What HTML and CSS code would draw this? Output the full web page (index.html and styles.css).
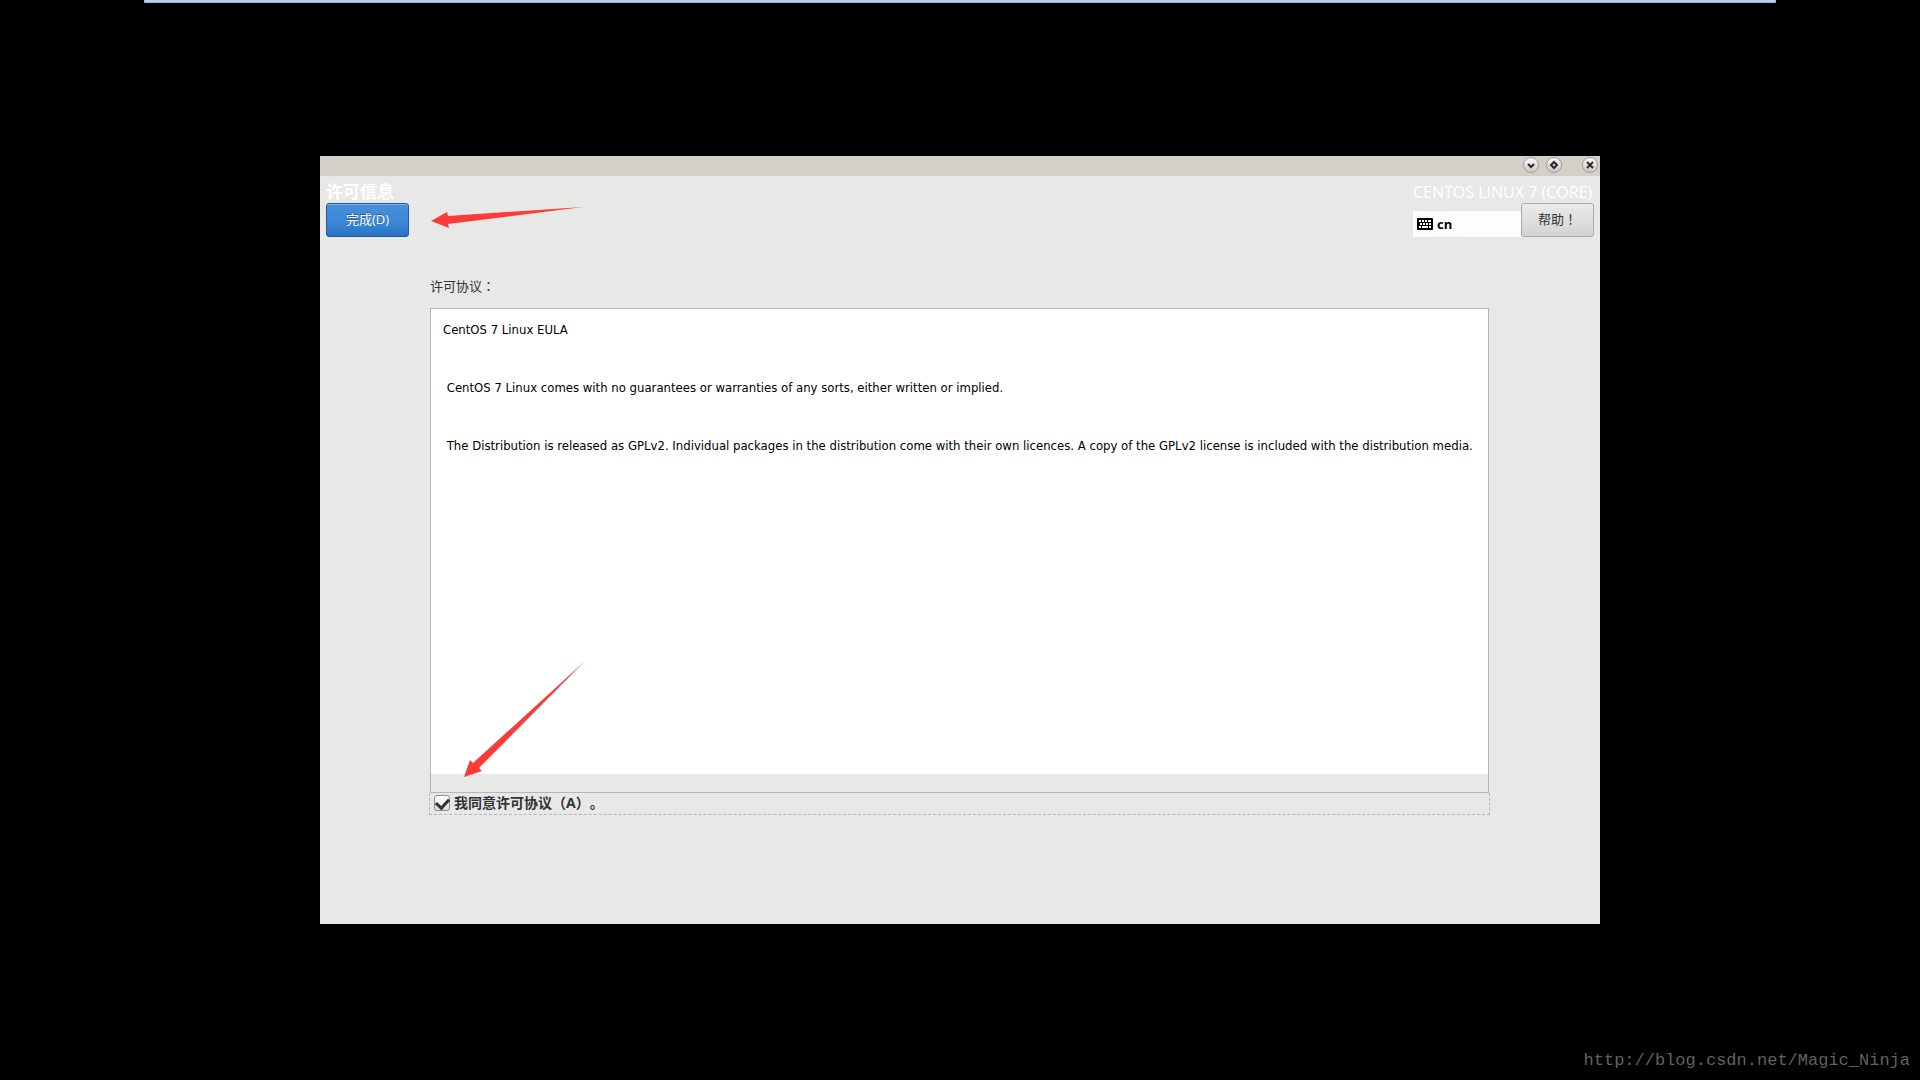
FILE: index.html
```
<!DOCTYPE html>
<html>

<head>
    <title>许可信息</title>
    <meta charset="utf-8">
    <meta name="viewport" content="width=device-width, initial-scale=1">
    <link rel="stylesheet" href="styles.css">
</head>

<body>
    <div class="top-strip"></div>
    <div class="window">
        <div class="titlebar">
            <button type="button" class="win-btn" aria-label="最小化">
                <svg viewBox="0 0 14 14"><path d="M4 6l3 3 3-3" /></svg>
            </button>
            <button type="button" class="win-btn" aria-label="最大化">
                <svg viewBox="0 0 14 14"><path d="M7 4l3 3-3 3-3-3z" /></svg>
            </button>
            <button type="button" class="win-btn win-close" aria-label="关闭">
                <svg viewBox="0 0 14 14"><path d="M4 4l6 6M10 4l-6 6" /></svg>
            </button>
        </div>
        <header class="header">
            <div class="header-side">
                <h1 class="page-title">许可信息</h1>
                <button type="button" class="btn btn-primary">完成(D)</button>
            </div>
            <div class="header-side">
                <div class="product">CENTOS LINUX 7 (CORE)</div>
                <div class="header-tools">
                    <div class="keyboard">
                        <svg class="keyboard-icon" viewBox="0 0 16 12">
                            <rect width="16" height="12" rx="1" />
                            <path d="M2 3h2m1 0h2m1 0h2m1 0h3M3 6h2m1 0h2m1 0h2m1 0h2M2 9h2m1 0h6m1 0h2" />
                        </svg>
                        <span>cn</span>
                    </div>
                    <button type="button" class="btn btn-help">帮助！</button>
                </div>
            </div>
        </header>
        <main class="content">
            <label class="eula-label" for="eula">许可协议：</label>
            <div class="eula-frame">
                <textarea id="eula" class="eula-text" readonly>CentOS 7 Linux EULA

 CentOS 7 Linux comes with no guarantees or warranties of any sorts, either written or implied.

 The Distribution is released as GPLv2. Individual packages in the distribution come with their own licences. A copy of the GPLv2 license is included with the distribution media.</textarea>
            </div>
            <div class="agree">
                <input type="checkbox" id="agree" class="agree-box" checked>
                <label for="agree">我同意许可协议（A）。</label>
            </div>
        </main>
        <svg class="arrow arrow-done" viewBox="0 0 152 22">
            <path d="M0 14L16 5l1 4L152 0 17 17l1 4z" />
        </svg>
        <svg class="arrow arrow-agree" viewBox="0 0 121 116">
            <path d="M0 116L6 99l3 3L121 0 15 107l3 3z" />
        </svg>
    </div>
    <div class="watermark">http://blog.csdn.net/Magic_Ninja</div>
</body>

</html>
```
FILE: styles.css
```
* {
    box-sizing: border-box;
}

body {
    margin: 0;
    min-height: 100vh;
    display: flex;
    align-items: center;
    justify-content: center;
    background-color: #000;
    color: #2e3436;
    font-family: "Open Sans", "Noto Sans CJK JP", sans-serif;
    font-size: 13px;
    text-spacing-trim: space-all;
}

button,
textarea {
    font: inherit;
}

.top-strip {
    position: absolute;
    top: 0;
    left: 7.5%;
    right: 7.5%;
    height: 3px;
    background-color: #b8cfee;
    border: 1px solid #9ab8e0;
    border-top: 0;
}

.window {
    position: relative;
    width: 66.6667%;
    padding-bottom: 109px;
    background-color: #e8e8e6;
}

/* title bar */
.titlebar {
    display: flex;
    justify-content: flex-end;
    align-items: flex-start;
    gap: 7px;
    height: 20px;
    padding: 1px 2px 0 0;
    background-color: #d4d0c8;
}

.win-btn {
    width: 16px;
    height: 16px;
    padding: 0;
    border: 1px solid #a09e9a;
    border-radius: 50%;
    background: linear-gradient(#fafafa, #c8c8c6);
}

.win-btn svg {
    display: block;
    width: 14px;
    height: 14px;
    fill: none;
    stroke: #2a2a2a;
    stroke-width: 2;
}

.win-close {
    margin-left: 13px;
}

/* header */
.header {
    display: flex;
    justify-content: space-between;
    padding: 5px 6px 0;
}

.page-title,
.product {
    margin: 0;
    height: 22px;
    line-height: 22px;
    font-size: 17px;
    color: #fff;
}

.product {
    font-size: 16px;
}

.btn {
    height: 34px;
    padding: 0 0 3px;
    border-radius: 3px;
    white-space: nowrap;
}

.btn-primary {
    width: 83px;
    color: #fff;
    border: 1px solid #1f5a9e;
    background: linear-gradient(#4a90d9, #3a86d6 60%, #2a72c4);
    box-shadow: inset 0 1px #7db1e8;
    text-shadow: 0 -1px #2b5c94;
}

.btn-help {
    width: 73px;
    color: #2e3436;
    border: 1px solid #a8a8a5;
    background: linear-gradient(#eaeae9, #d3d3d1);
}

.header-tools {
    display: flex;
    align-items: flex-end;
}

.keyboard {
    display: flex;
    align-items: center;
    gap: 4px;
    width: 108px;
    height: 26px;
    padding-left: 4px;
    background-color: #fdfdfd;
    color: #000;
    font-weight: bold;
}

.keyboard-icon {
    width: 16px;
    height: 12px;
}

.keyboard-icon path {
    stroke: #fff;
    stroke-width: 2;
}

/* licence text */
.content {
    padding: 39px 110px 0 109px;
}

.eula-label {
    display: block;
    height: 32px;
    padding-left: 1px;
    line-height: 20px;
}

.eula-frame {
    margin: 0 1px;
    padding-bottom: 18px;
    border: 1px solid #b6b6b3;
}

.eula-text {
    display: block;
    width: 100%;
    height: 465px;
    padding: 6px 12px;
    border: 0;
    outline: 0;
    resize: none;
    background-color: #fff;
    color: #000;
    font-family: "DejaVu Sans Condensed", "DejaVu Sans", sans-serif;
    line-height: 29px;
}

.agree {
    display: flex;
    align-items: center;
    gap: 4px;
    height: 22px;
    padding: 0 0 2px 4px;
    border: 1px dashed #b6b6b3;
    border-top: 0;
    font-size: 14px;
    font-weight: bold;
    line-height: 18px;
}

.agree-box {
    appearance: none;
    display: flex;
    justify-content: center;
    width: 16px;
    height: 16px;
    margin: 0;
    border: 1px solid #8f8f8c;
    border-radius: 3px;
    background: linear-gradient(#fff, #dededc);
}

.agree-box:checked::before {
    content: "";
    width: 6px;
    height: 10px;
    border: solid #2e3436;
    border-width: 0 3px 3px 0;
    transform: rotate(42deg);
}

/* pointers drawn over the window */
.arrow {
    position: absolute;
    fill: #fc3a38;
    pointer-events: none;
}

.arrow-done {
    top: 51px;
    left: 111px;
    width: 152px;
}

.arrow-agree {
    top: 505px;
    left: 144px;
    width: 121px;
}

.watermark {
    position: absolute;
    right: 10px;
    bottom: 10px;
    color: #62625e;
    font-family: "Liberation Mono", monospace;
    font-size: 17px;
}
```
